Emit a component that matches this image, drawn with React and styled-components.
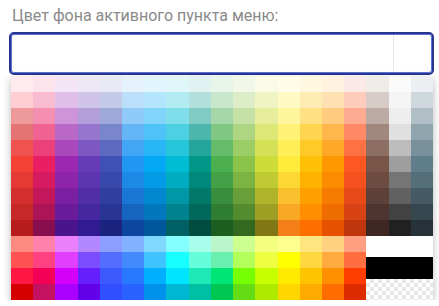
import React from "react"
import styled, { createGlobalStyle } from "styled-components"

const GlobalStyle = createGlobalStyle`
  body {
    margin: 0;
    background: #fff;
    font-family: Roboto, "Noto Sans", sans-serif;
  }
`

// material palette: 50..900, then A100..A700
const shades = [
  ["#ffebee", "#ffcdd2", "#ef9a9a", "#e57373", "#ef5350", "#f44336", "#e53935", "#d32f2f", "#c62828", "#b71c1c", "#ff8a80", "#ff5252", "#ff1744", "#d50000"],
  ["#fce4ec", "#f8bbd0", "#f48fb1", "#f06292", "#ec407a", "#e91e63", "#d81b60", "#c2185b", "#ad1457", "#880e4f", "#ff80ab", "#ff4081", "#f50057", "#c51162"],
  ["#f3e5f5", "#e1bee7", "#ce93d8", "#ba68c8", "#ab47bc", "#9c27b0", "#8e24aa", "#7b1fa2", "#6a1b9a", "#4a148c", "#ea80fc", "#e040fb", "#d500f9", "#aa00ff"],
  ["#ede7f6", "#d1c4e9", "#b39ddb", "#9575cd", "#7e57c2", "#673ab7", "#5e35b1", "#512da8", "#4527a0", "#311b92", "#b388ff", "#7c4dff", "#651fff", "#6200ea"],
  ["#e8eaf6", "#c5cae9", "#9fa8da", "#7986cb", "#5c6bc0", "#3f51b5", "#3949ab", "#303f9f", "#283593", "#1a237e", "#8c9eff", "#536dfe", "#3d5afe", "#304ffe"],
  ["#e3f2fd", "#bbdefb", "#90caf9", "#64b5f6", "#42a5f5", "#2196f3", "#1e88e5", "#1976d2", "#1565c0", "#0d47a1", "#82b1ff", "#448aff", "#2979ff", "#2962ff"],
  ["#e1f5fe", "#b3e5fc", "#81d4fa", "#4fc3f7", "#29b6f6", "#03a9f4", "#039be5", "#0288d1", "#0277bd", "#01579b", "#80d8ff", "#40c4ff", "#00b0ff", "#0091ea"],
  ["#e0f7fa", "#b2ebf2", "#80deea", "#4dd0e1", "#26c6da", "#00bcd4", "#00acc1", "#0097a7", "#00838f", "#006064", "#84ffff", "#18ffff", "#00e5ff", "#00b8d4"],
  ["#e0f2f1", "#b2dfdb", "#80cbc4", "#4db6ac", "#26a69a", "#009688", "#00897b", "#00796b", "#00695c", "#004d40", "#a7ffeb", "#64ffda", "#1de9b6", "#00bfa5"],
  ["#e8f5e9", "#c8e6c9", "#a5d6a7", "#81c784", "#66bb6a", "#4caf50", "#43a047", "#388e3c", "#2e7d32", "#1b5e20", "#b9f6ca", "#69f0ae", "#00e676", "#00c853"],
  ["#f1f8e9", "#dcedc8", "#c5e1a5", "#aed581", "#9ccc65", "#8bc34a", "#7cb342", "#689f38", "#558b2f", "#33691e", "#ccff90", "#b2ff59", "#76ff03", "#64dd17"],
  ["#f9fbe7", "#f0f4c3", "#e6ee9c", "#dce775", "#d4e157", "#cddc39", "#c0ca33", "#afb42b", "#9e9d24", "#827717", "#f4ff81", "#eeff41", "#c6ff00", "#aeea00"],
  ["#fffde7", "#fff9c4", "#fff59d", "#fff176", "#ffee58", "#ffeb3b", "#fdd835", "#fbc02d", "#f9a825", "#f57f17", "#ffff8d", "#ffff00", "#ffea00", "#ffd600"],
  ["#fff8e1", "#ffecb3", "#ffe082", "#ffd54f", "#ffca28", "#ffc107", "#ffb300", "#ffa000", "#ff8f00", "#ff6f00", "#ffe57f", "#ffd740", "#ffc400", "#ffab00"],
  ["#fff3e0", "#ffe0b2", "#ffcc80", "#ffb74d", "#ffa726", "#ff9800", "#fb8c00", "#f57c00", "#ef6c00", "#e65100", "#ffd180", "#ffab40", "#ff9100", "#ff6d00"],
  ["#fbe9e7", "#ffccbc", "#ffab91", "#ff8a65", "#ff7043", "#ff5722", "#f4511e", "#e64a19", "#d84315", "#bf360c", "#ff9e80", "#ff6e40", "#ff3d00", "#dd2c00"],
  ["#efebe9", "#d7ccc8", "#bcaaa4", "#a1887f", "#8d6e63", "#795548", "#6d4c41", "#5d4037", "#4e342e", "#3e2723"],
  ["#fafafa", "#f5f5f5", "#eeeeee", "#e0e0e0", "#bdbdbd", "#9e9e9e", "#757575", "#616161", "#424242", "#212121"],
  ["#eceff1", "#cfd8dc", "#b0bec5", "#90a4ae", "#78909c", "#607d8b", "#546e7a", "#455a64", "#37474f", "#263238"],
]

const Page = styled.div`
  padding: 6px 5px 0 9px;
  width: 425px;
`

const Label = styled.div`
  padding-left: 3px;
  font-size: 16px;
  line-height: 19px;
  color: #8a8a8a;
  margin-bottom: 7px;
`

const Field = styled.div`
  display: flex;
  height: 43px;
  box-sizing: border-box;
  border: 2px solid #283593;
  border-radius: 5px;
  box-shadow: inset 0 0 0 1px #5b73d4;
  background: #fff;
  overflow: hidden;
`

const TextPart = styled.div`
  flex: 1;
`

const Preview = styled.div`
  width: 37px;
  border-left: 1px solid #e6e6e6;
  margin: 1px 1px 1px 0;
`

const Popover = styled.div`
  margin: 1px 1px 0 2px;
  box-shadow: 0 3px 8px rgba(0, 0, 0, 0.28);
  background: #fff;
`

const Grid = styled.div`
  display: grid;
  grid-template-columns: repeat(${(p) => p.$cols}, 1fr);
  grid-template-rows: repeat(${(p) => p.$rows}, 16px);
  grid-auto-flow: column;
`

const Bottom = styled.div`
  display: grid;
  grid-template-columns: 16fr 3fr;
`

const Extras = styled.div`
  display: grid;
  grid-template-rows: repeat(3, 1fr);
`

const Swatch = styled.div`
  background: ${(p) => p.$color};
`

const Transparent = styled.div`
  background-color: #fff;
  background-image:
    linear-gradient(45deg, #e6e6e6 25%, transparent 25%, transparent 75%, #e6e6e6 75%),
    linear-gradient(45deg, #e6e6e6 25%, transparent 25%, transparent 75%, #e6e6e6 75%);
  background-size: 8px 8px;
  background-position: 0 0, 4px 4px;
`

export default function App() {
  return (
    <Page>
      <GlobalStyle />
      <Label>Цвет фона активного пункта меню:</Label>
      <Field>
        <TextPart />
        <Preview />
      </Field>
      <Popover>
        <Grid $cols={19} $rows={10}>
          {shades.map((hue) =>
            hue.slice(0, 10).map((c) => <Swatch key={c} $color={c} />)
          )}
        </Grid>
        <Bottom>
          <Grid $cols={16} $rows={4}>
            {shades.slice(0, 16).map((hue) =>
              hue.slice(10).map((c) => <Swatch key={c} $color={c} />)
            )}
          </Grid>
          <Extras>
            <Swatch $color="#ffffff" />
            <Swatch $color="#000000" />
            <Transparent />
          </Extras>
        </Bottom>
      </Popover>
    </Page>
  )
}
